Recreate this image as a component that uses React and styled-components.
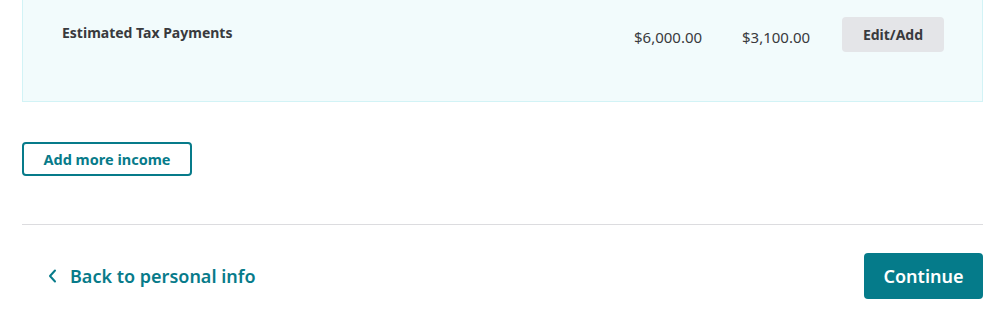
import React from "react";
import styled, { createGlobalStyle } from "styled-components";

const GlobalStyle = createGlobalStyle`
  html, body {
    margin: 0;
    padding: 0;
    background: #ffffff;
  }
  body {
    font-family: "Noto Sans", "Open Sans", Arial, sans-serif;
    color: #393a3d;
  }
`;

const Page = styled.div`
  width: 999px;
  height: 321px;
  box-sizing: border-box;
  padding: 0 16px 0 22px;
  display: flex;
  flex-direction: column;
  overflow: hidden;
`;

const Panel = styled.div`
  height: 102px;
  box-sizing: border-box;
  background: #f2fbfc;
  border: 1px solid #d2f3f6;
  border-top: none;
  padding: 17px 38px 0 39px;
  display: flex;
  align-items: flex-start;
`;

const RowTitle = styled.div`
  flex: 1;
  font-size: 14px;
  font-weight: 700;
  line-height: 20px;
  padding-top: 6px;
  color: #393a3d;
`;

const Amount = styled.div`
  width: ${({ $w }) => $w}px;
  font-size: 15px;
  line-height: 20px;
  padding-top: 10px;
  color: #393a3d;
`;

const GreyButton = styled.button`
  width: 102px;
  height: 35px;
  border: none;
  border-radius: 4px;
  background: #e4e5e8;
  font-family: inherit;
  font-size: 14px;
  font-weight: 700;
  color: #393a3d;
  cursor: pointer;
`;

const OutlineButton = styled.button`
  align-self: flex-start;
  margin-top: 40px;
  width: 170px;
  height: 34px;
  box-sizing: border-box;
  border: 2px solid #077b8a;
  border-radius: 4px;
  background: #ffffff;
  font-family: inherit;
  font-size: 14.5px;
  font-weight: 700;
  color: #077b8a;
  cursor: pointer;
`;

const Divider = styled.hr`
  margin: 48px 0 0 0;
  border: none;
  border-top: 1px solid #dcdcdf;
`;

const Footer = styled.div`
  margin-top: 28px;
  display: flex;
  align-items: center;
  justify-content: space-between;
`;

const BackLink = styled.a`
  display: flex;
  align-items: center;
  gap: 13px;
  padding-left: 25px;
  font-size: 18px;
  font-weight: 600;
  color: #077b8a;
  text-decoration: none;
  cursor: pointer;
`;

const PrimaryButton = styled.button`
  width: 119px;
  height: 46px;
  border: none;
  border-radius: 4px;
  background: #057b8a;
  font-family: inherit;
  font-size: 18px;
  font-weight: 600;
  color: #ffffff;
  cursor: pointer;
`;

const Chevron = () => (
  <svg width="10" height="16" viewBox="0 0 10 16" fill="none">
    <path d="M8 2.5 L3 8 L8 13.5" stroke="#077b8a" strokeWidth="2" strokeLinecap="round" strokeLinejoin="round" />
  </svg>
);

export default function App() {
  return (
    <>
      <GlobalStyle />
      <Page>
        <Panel>
          <RowTitle>Estimated Tax Payments</RowTitle>
          <Amount $w={108}>$6,000.00</Amount>
          <Amount $w={100}>$3,100.00</Amount>
          <GreyButton>Edit/Add</GreyButton>
        </Panel>
        <OutlineButton>Add more income</OutlineButton>
        <Divider />
        <Footer>
          <BackLink>
            <Chevron />
            Back to personal info
          </BackLink>
          <PrimaryButton>Continue</PrimaryButton>
        </Footer>
      </Page>
    </>
  );
}
